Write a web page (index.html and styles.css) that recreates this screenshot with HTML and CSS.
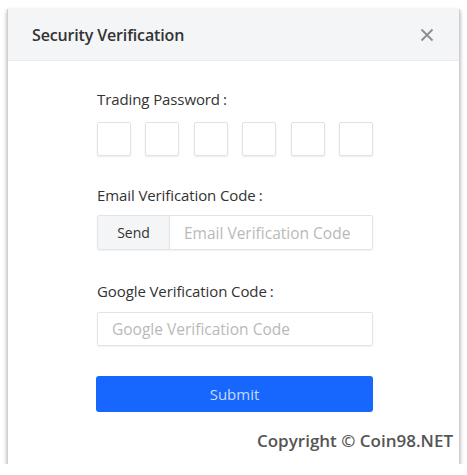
FILE: index.html
```html
<!DOCTYPE html>
<html>
<head>
<meta charset="utf-8">
<link rel="stylesheet" href="styles.css">
</head>
<body>
<div class="dialog">
  <div class="dialog-header">
    <span class="dialog-title">Security Verification</span>
    <svg class="close" width="14" height="14" viewBox="0 0 14 14"><path d="M1.5 1.5 L12.5 12.5 M12.5 1.5 L1.5 12.5" stroke="#8a8d93" stroke-width="1.8" fill="none"/></svg>
  </div>
  <div class="dialog-body">
    <div class="field">
      <div class="label">Trading Password<span class="colon">:</span></div>
      <div class="pin-row">
        <div class="pin"></div><div class="pin"></div><div class="pin"></div><div class="pin"></div><div class="pin"></div><div class="pin"></div>
      </div>
    </div>
    <div class="field">
      <div class="label">Email Verification Code<span class="colon">:</span></div>
      <div class="input-group">
        <div class="addon">Send</div>
        <div class="placeholder">Email Verification Code</div>
      </div>
    </div>
    <div class="field">
      <div class="label">Google Verification Code<span class="colon">:</span></div>
      <div class="input single">
        <div class="placeholder">Google Verification Code</div>
      </div>
    </div>
    <div class="submit">Submit</div>
    <div class="copyright">Copyright © Coin98.NET</div>
  </div>
</div>
</body>
</html>
```
FILE: styles.css
```css
* { box-sizing: border-box; }
html, body { margin: 0; padding: 0; background: #fff; }
body { font-family: "Open Sans", "Noto Sans", sans-serif; color: #3a3a3a; }
.dialog {
  margin: 9px 0 0 7px;
  width: 453px;
  height: 455px;
  background: #fff;
  border-left: 1px solid #cfcfcf;
  border-right: 1px solid #cfcfcf;
  box-shadow: 0 2px 4px rgba(0,0,0,0.35);
  display: flex;
  flex-direction: column;
}
.dialog-header {
  height: 52px;
  background: #f4f5f7;
  border-bottom: 1px solid #e9ebef;
  display: flex;
  align-items: center;
  justify-content: space-between;
  padding: 0 25px 0 24px;
}
.dialog-title { font-size: 16px; font-weight: 600; color: #333; letter-spacing: -0.15px; }
.close { display: block; }
.dialog-body {
  padding: 28px 0 0 89px;
  display: flex;
  flex-direction: column;
}
.field { width: 276px; }
.label { font-size: 15px; line-height: 20px; color: #333; letter-spacing: -0.1px; }
.colon { margin-left: 3px; }
.pin-row { margin-top: 13px; display: flex; justify-content: space-between; }
.pin {
  width: 34px; height: 34px;
  border: 1px solid #e2e2e2;
  border-radius: 2px;
  box-shadow: 0 1px 2px rgba(0,0,0,0.08);
}
.field + .field { margin-top: 29px; }
.field:nth-child(3) { margin-top: 31px; }
.input-group {
  margin-top: 10px;
  height: 35px;
  display: flex;
  border: 1px solid #e2e4e8;
  border-radius: 2px;
  box-shadow: 0 1px 2px rgba(0,0,0,0.06);
}
.addon {
  width: 72px;
  background: #f4f5f7;
  border-right: 1px solid #e2e4e8;
  display: flex; align-items: center; justify-content: center;
  font-size: 14px; color: #333;
}
.placeholder { font-size: 15.5px; color: #b9b9b9; display: flex; align-items: center; padding-left: 14px; }
.input {
  margin-top: 11px;
  height: 34px;
  display: flex;
  border: 1px solid #e2e4e8;
  border-radius: 2px;
  box-shadow: 0 1px 2px rgba(0,0,0,0.06);
}
.submit {
  margin-top: 30px;
  width: 277px;
  margin-left: -1px;
  height: 36px;
  background: #1766fe;
  border-radius: 3px;
  color: #c9dafa;
  font-size: 15px;
  display: flex; align-items: center; justify-content: center;
}
.copyright {
  align-self: flex-end;
  margin-top: 17px;
  margin-right: 6px;
  font-family: "Open Sans", sans-serif;
  font-weight: 600;
  font-size: 17px;
  color: #555;
}
```
